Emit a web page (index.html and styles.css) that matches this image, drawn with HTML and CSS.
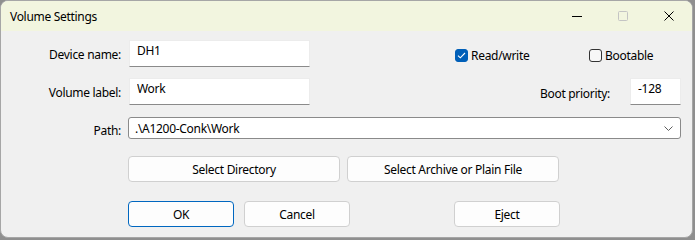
FILE: index.html
```html
<!DOCTYPE html>
<html lang="en">
<head>
    <meta charset="UTF-8">
    <title>Volume Settings</title>
    <link rel="stylesheet" href="styles.css">
</head>
<body>
    <div class="window">
        <div class="titlebar">
            <span class="title">Volume Settings</span>
            <div class="caption-buttons">
                <span class="cap-btn">
                    <svg width="10" height="10" viewBox="0 0 10 10"><path d="M0 5.5h10" stroke="#000" stroke-width="1"/></svg>
                </span>
                <span class="cap-btn disabled">
                    <svg width="10" height="10" viewBox="0 0 10 10"><rect x="0.5" y="0.5" width="9" height="9" rx="1" fill="none" stroke="#c4c4c4" stroke-width="1"/></svg>
                </span>
                <span class="cap-btn">
                    <svg width="10" height="10" viewBox="0 0 10 10"><path d="M0.5 0.5l9 9M9.5 0.5l-9 9" stroke="#000" stroke-width="1"/></svg>
                </span>
            </div>
        </div>

        <div class="content">
            <div class="row row-device">
                <label class="field-label" for="deviceName">Device name:</label>
                <input class="text-input short" id="deviceName" type="text" value="DH1">
                <label class="check read-write">
                    <span class="box checked">
                        <svg width="9" height="7" viewBox="0 0 9 7"><path d="M1 3.6l2.3 2.2L8 1" fill="none" stroke="#fff" stroke-width="1.1"/></svg>
                    </span>
                    Read/write
                </label>
                <label class="check">
                    <span class="box"></span>
                    Bootable
                </label>
            </div>

            <div class="row row-label">
                <label class="field-label" for="volumeLabel">Volume label:</label>
                <input class="text-input short" id="volumeLabel" type="text" value="Work">
                <label class="boot-label" for="bootPriority">Boot priority:</label>
                <input class="text-input tiny" id="bootPriority" type="text" value="-128">
            </div>

            <div class="row row-path">
                <label class="field-label path-label">Path:</label>
                <div class="combo">
                    <span class="combo-text">.\A1200-Conk\Work</span>
                    <svg class="chevron" width="9" height="5" viewBox="0 0 9 5"><path d="M0.5 0.5l4 4 4-4" fill="none" stroke="#5e5e5e" stroke-width="1"/></svg>
                </div>
            </div>

            <div class="row row-select">
                <button class="btn wide">Select Directory</button>
                <button class="btn wide">Select Archive or Plain File</button>
            </div>

            <div class="row row-actions">
                <button class="btn small default">OK</button>
                <button class="btn small">Cancel</button>
                <button class="btn small eject">Eject</button>
            </div>
        </div>
    </div>
</body>
</html>
```

FILE: styles.css
```css
* {
    box-sizing: border-box;
}
body {
    margin: 0;
    width: 695px;
    height: 240px;
    background-color: #8f8f8f;
    font-family: 'Noto Sans', 'Open Sans', sans-serif;
    font-size: 12px;
    letter-spacing: -0.3px;
    color: #000;
    overflow: hidden;
}
.window {
    width: 693px;
    height: 238px;
    background-color: #f0f0f0;
    border: 1px solid #a6a6a6;
    border-radius: 8px;
    overflow: hidden;
}
.titlebar {
    height: 30px;
    background-color: #f2f5df;
    display: flex;
    align-items: center;
}
.title {
    padding-left: 9px;
    flex: 1;
}
.caption-buttons {
    display: flex;
    height: 100%;
}
.cap-btn {
    width: 46px;
    display: flex;
    align-items: center;
    justify-content: center;
}
.cap-btn svg {
    display: block;
}
.content {
    padding: 0 11px 0 0;
}
.row {
    display: flex;
    align-items: center;
}
.row-device {
    margin-top: 9px;
    height: 27px;
}
.row-label {
    margin-top: 11px;
    height: 27px;
}
.row-path {
    margin-top: 12px;
    height: 22px;
}
.row-select {
    margin-top: 17px;
    padding-left: 127px;
    gap: 7px;
}
.row-actions {
    margin-top: 19px;
    padding-left: 127px;
    gap: 10px;
}
.field-label {
    width: 120px;
    text-align: right;
    margin-right: 8px;
    padding-top: 2px;
}
.path-label {
    margin-right: 7px;
    padding-top: 4px;
}
.text-input {
    height: 27px;
    border: 1px solid #ececec;
    border-bottom-color: #8a8a8a;
    background-color: #fff;
    font: inherit;
    letter-spacing: inherit;
    color: #000;
    padding: 0 7px 6px;
    outline: none;
}
.short {
    width: 181px;
}
.tiny {
    width: 51px;
    margin-left: 20px;
}
.check {
    display: flex;
    align-items: center;
    gap: 3px;
    padding-top: 3px;
}
.read-write {
    margin-left: 145px;
    width: 134px;
}
.box {
    width: 13px;
    height: 13px;
    border: 1px solid #333;
    border-radius: 3px;
    background-color: #f7f7f7;
    display: flex;
    align-items: center;
    justify-content: center;
}
.box.checked {
    background-color: #005fb8;
    border-color: #005fb8;
}
.box svg {
    display: block;
}
.boot-label {
    flex: 1;
    text-align: right;
    padding-top: 3px;
}
.combo {
    flex: 1;
    height: 22px;
    background-color: #fff;
    border: 1px solid #8a8a8a;
    border-radius: 3px;
    display: flex;
    align-items: center;
    padding: 0 7px 0 6px;
}
.combo-text {
    flex: 1;
}
.chevron {
    display: block;
}
.btn {
    height: 26px;
    background-color: #fdfdfd;
    border: 1px solid #d0d0d0;
    border-radius: 4px;
    font: inherit;
    letter-spacing: inherit;
    color: #000;
    padding: 0;
}
.wide {
    width: 212px;
}
.small {
    width: 106px;
}
.default {
    border-color: #0067c0;
}
.eject {
    margin-left: 94px;
}
```
